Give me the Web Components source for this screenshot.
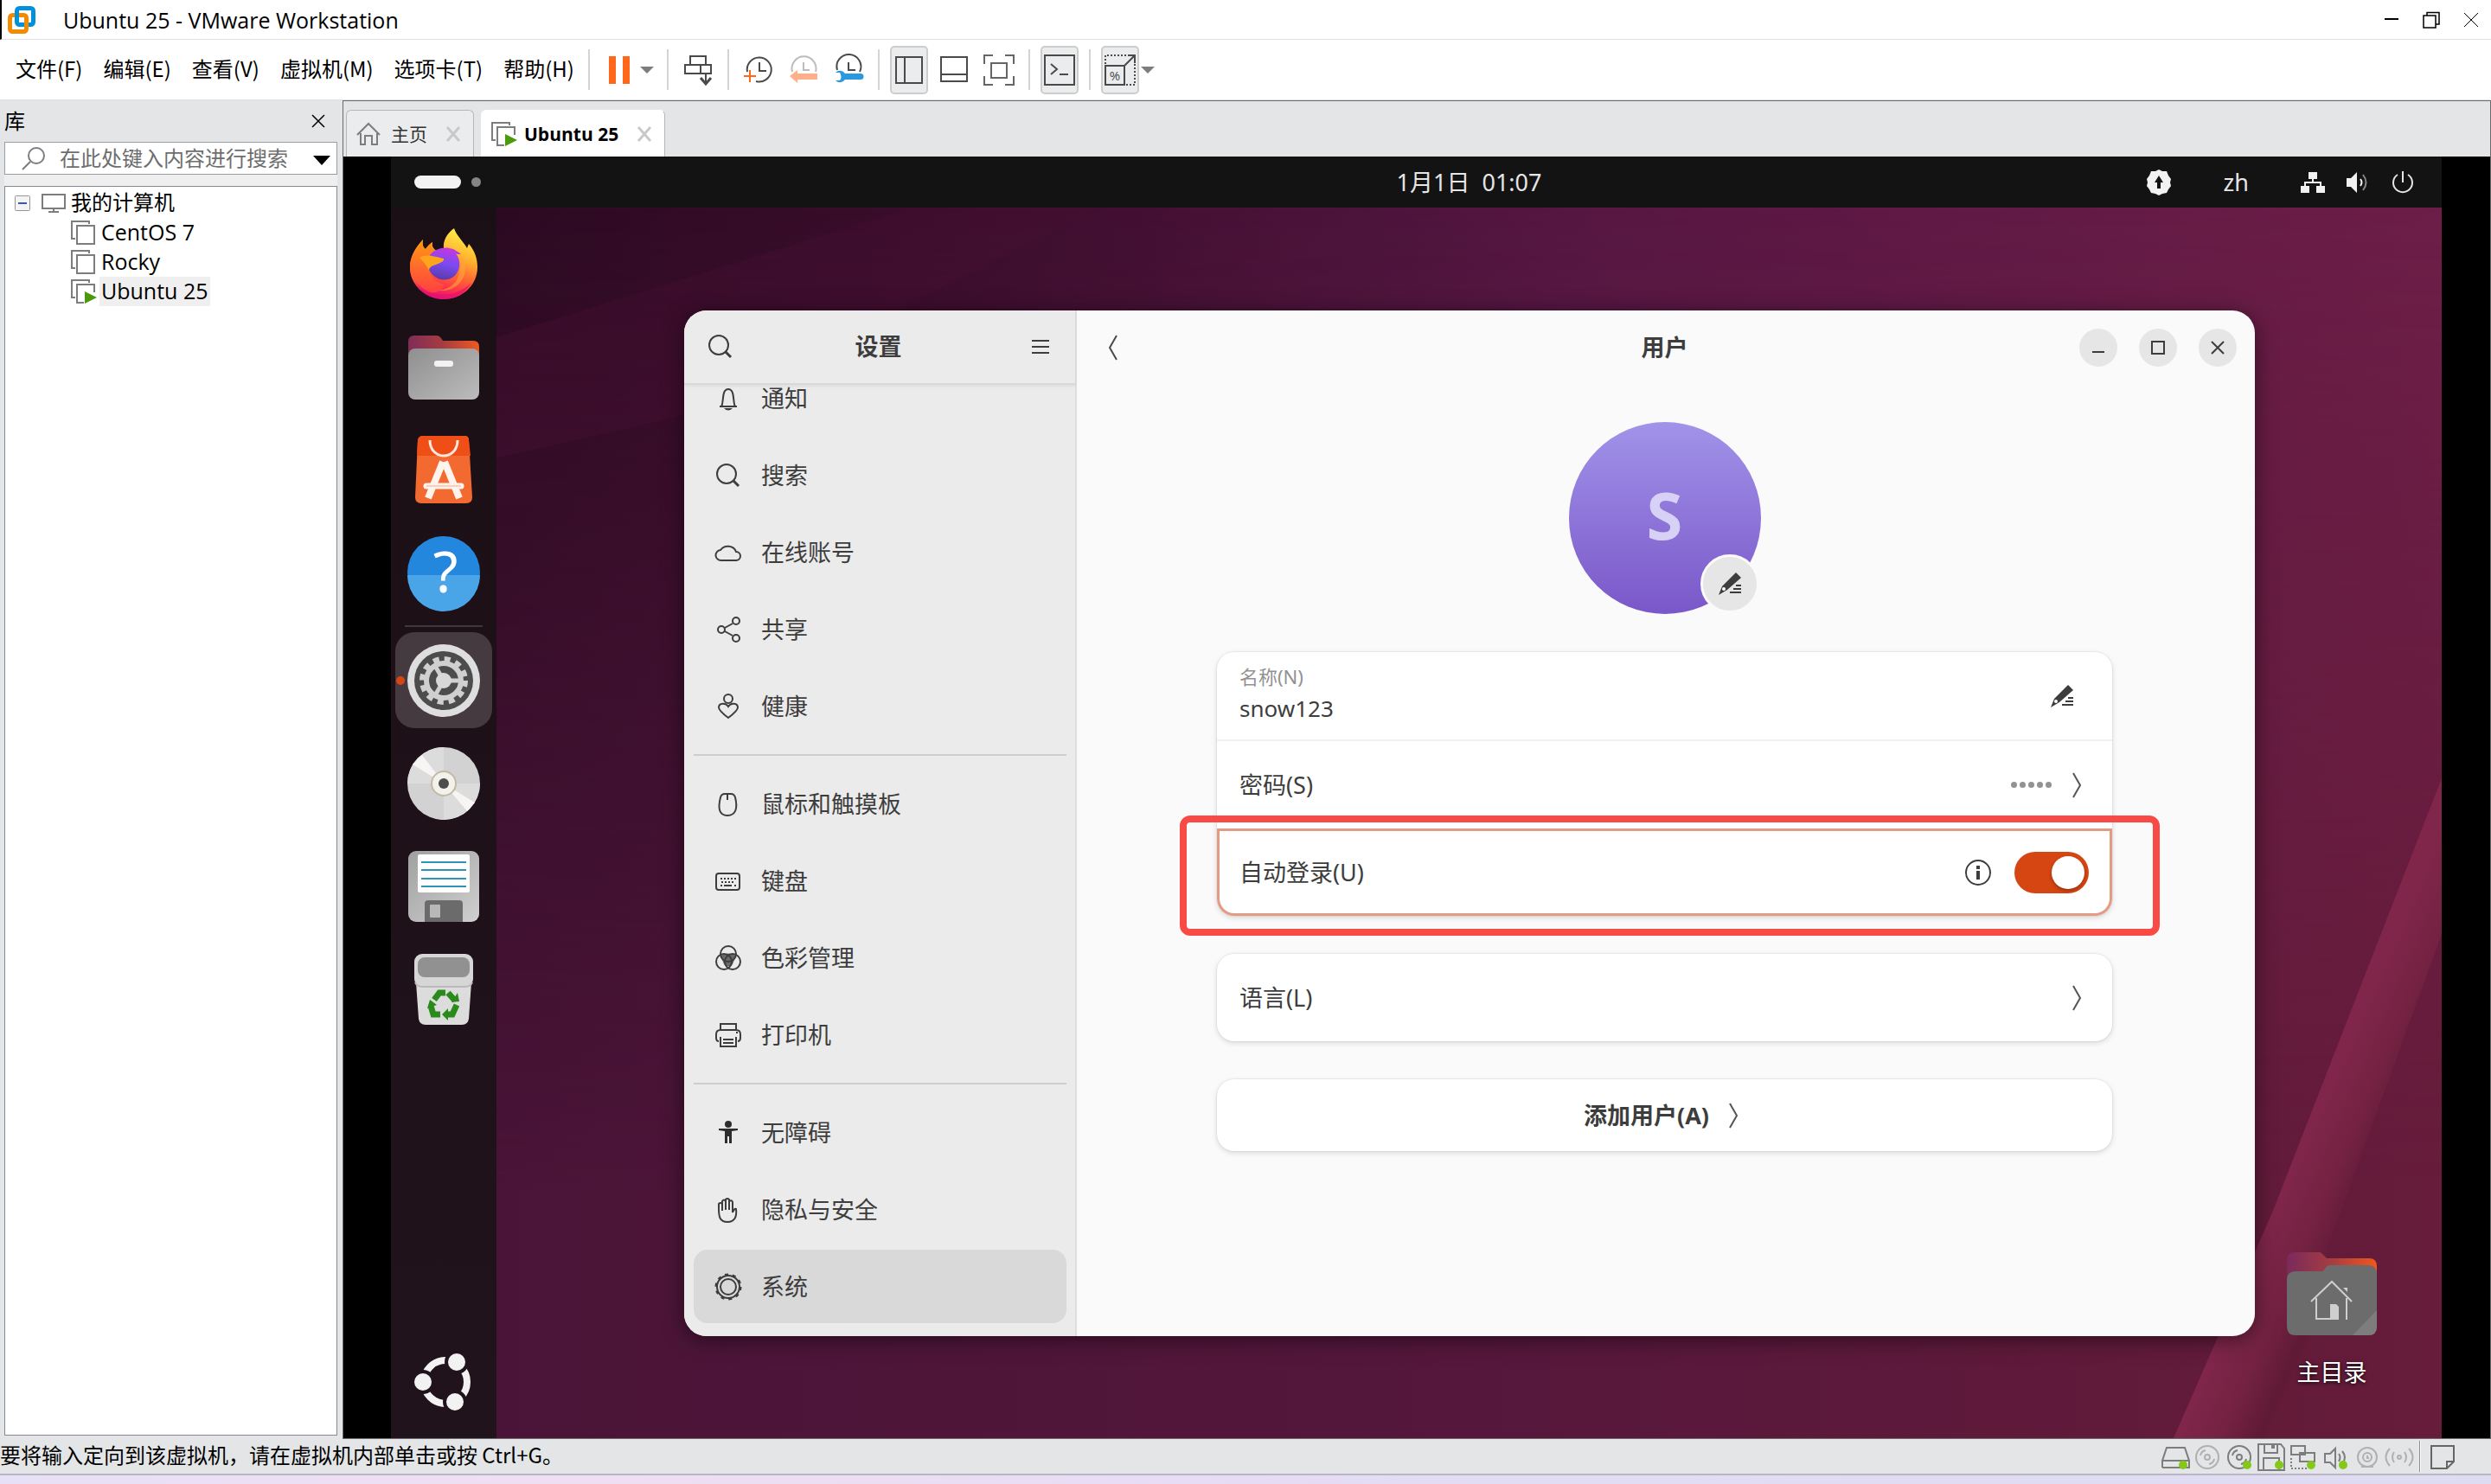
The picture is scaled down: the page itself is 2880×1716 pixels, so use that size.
<!DOCTYPE html>
<html lang="zh-CN">
<head>
<meta charset="utf-8">
<title>Ubuntu 25 - VMware Workstation</title>
<style>
    html, body { height: 100%; margin: 0; }
    body {
        background: #e3e5e6;
        color: #000;
        font: 24px/34px "Open Sans", "Noto Sans CJK SC", sans-serif;
    }
</style>
</head>
<body>
<vm-app></vm-app>

<script>
// name: [width, height, markup]
const ICONS = {
    logo: [32, 32, `<g fill="none" stroke-width="5"><rect x="10.500" y="2.500" width="19" height="19" rx="3" stroke="#0091da"/><rect x="2.500" y="10.500" width="19" height="19" rx="3" stroke="#f38b00"/><path d="M10.500 13V18.500a3 3 0 0 0 3 3H16" stroke="#fff" stroke-width="7"/><path d="M10.500 8V18.500a3 3 0 0 0 3 3H19" stroke="#0091da"/></g>`],
    min: [18, 18, `<path d="M1 8h16" stroke="#000" stroke-width="2"/>`],
    restore: [20, 20, `<g fill="none" stroke="#000" stroke-width="1.500"><rect x="1" y="5" width="14" height="14"/><path d="M5 5V1.500h14V15h-4"/></g>`],
    close: [18, 18, `<path d="M1 1l16 16M17 1L1 17" stroke="#000"/>`],
    panelClose: [16, 16, `<path d="M1 1l14 14M15 1L1 15" stroke="#000" stroke-width="1.500"/>`],
    tabClose: [18, 18, `<path d="M2 1l14 16M16 1L2 17" stroke="#c8c9ca" stroke-width="3"/>`],
    caret: [20, 12, `<path d="M0 0h20L10 11z"/>`],
    grayCaret: [16, 10, `<path d="M0 1h16L8 9z" fill="#7d7d7d"/>`],
    pause: [24, 34, `<path d="M0 1h8v32H0zM16 1h8v32h-8z" fill="#ff671b"/>`],
    send: [32, 36, `<g fill="none" stroke="#4a4a4a" stroke-width="2"><path d="M7 12V2h18v10M1 12h30v10H1zM19 12v10M25 22v11"/><path d="M19 27l6 7 6-7" stroke-width="3"/></g>`],
    snapAdd: [34, 34, `<g fill="none" stroke="#4a4a4a" stroke-width="2"><path d="M4 19A14 14 0 1 1 14 30"/><path d="M18 8v10h8"/><path d="M0 24h14M7 17v14" stroke="#ff671b"/></g>`],
    snapBack: [34, 34, `<g fill="none" stroke="#bcbcbc" stroke-width="2"><path d="M4 19A14 14 0 1 1 31 19M17 8v9h7"/></g><path d="M1 24l9-7v4h23v7H10v4z" fill="#ffb08b"/>`],
    snapManage: [34, 34, `<g fill="none" stroke="#4a4a4a" stroke-width="2"><path d="M4 17A14 14 0 1 1 30 19M17 8v9h8"/></g><path d="M2 20a7 7 0 0 1 11 1h18a3 3 0 0 1 0 7H13a7 7 0 0 1-11 1h5q3-4 0-9z" fill="#2a9adf"/>`],
    viewLib: [36, 36, `<path d="M3 3h30v30H3zM13 3v30" fill="none" stroke="#4a4a4a" stroke-width="2"/>`],
    viewThumb: [36, 36, `<path d="M3 3h30v28H3zM3 23h30" fill="none" stroke="#4a4a4a" stroke-width="2"/>`],
    viewFull: [38, 38, `<path d="M2 12V2h10M26 2h10v10M36 26v10H26M12 36H2V26M10 11h18v17H10z" fill="none" stroke="#666" stroke-width="2"/>`],
    consoleView: [38, 38, `<path d="M2 2h34v34H2zM9 12l7 6-7 6M19 24h10" fill="none" stroke="#4a4a4a" stroke-width="2"/>`],
    stretch: [38, 38, `<g fill="none" stroke="#4a4a4a" stroke-width="2"><path d="M2 14h22v22H2zM24 14L35 3M28 2h8v9"/><path d="M2 12V2h26M36 12v24H26" stroke-dasharray="2 2"/></g><text x="13" y="31" text-anchor="middle" font-family="Open Sans" font-size="15" fill="#4a4a4a">%</text>`],
    find: [28, 28, `<g fill="none" stroke="#7d7d7d" stroke-width="2"><circle cx="17" cy="11" r="9"/><path d="M10 18l-9 9"/></g>`],
    expander: [18, 18, `<rect x=".5" y=".5" width="17" height="17" rx="1" fill="#f4f4f4" stroke="#969696"/><path d="M4 9h10" stroke="#3b5aa6" stroke-width="2"/>`],
    monitor: [30, 24, `<path d="M2 2h26v16H2zM15 18v4M9 22h12" fill="none" stroke="#7d7d7d" stroke-width="2"/>`],
    machine: [30, 30, `<path d="M21 5V2H1v20h4M7 7h20v21H7z" fill="none" stroke="#7d7d7d" stroke-width="2"/>`],
    machineOn: [30, 30, `<path d="M21 5V2H1v20h4M27 16V7H7v21h8" fill="none" stroke="#7d7d7d" stroke-width="2"/><path d="M16 15l14 7-14 7z" fill="#4a9a0c"/>`],
    house: [28, 28, `<path d="M1 15L14 2l13 13M5 13v13h5V16h8v10h6V13" fill="none" stroke="#7d7d7d" stroke-width="2"/>`],

    update: [30, 32, `<path d="M15 1l4 2 5 0 2 5 3 4-1 4 1 4-3 4-2 4-5 1-4 2-4-2-5-1-2-4-3-4 1-4-1-4 3-4 2-5 5 0z" fill="#f2f2f2"/><path d="M15 8l5 8h-3v7h-4v-7h-3z" fill="#131313"/>`],
    network: [28, 28, `<path d="M9 2h10v8H9zM0 18h10v8H0zM18 18h10v8H18z" fill="#f2f2f2"/><path d="M14 9v5M5 19v-5h18v5" fill="none" stroke="#f2f2f2" stroke-width="2"/>`],
    volume: [28, 28, `<path d="M1 9h5l7-7v24l-7-7H1z" fill="#f2f2f2"/><path d="M17 10q3 4 0 8" fill="none" stroke="#f2f2f2" stroke-width="2"/><path d="M20 5q7 9 0 18" fill="none" stroke="#888" stroke-width="2"/>`],
    power: [28, 28, `<path d="M8 5a11 11 0 1 0 12 0M14 1v13" fill="none" stroke="#e6e6e6" stroke-width="2"/>`],

    firefox: [84, 84, `<defs>
        <linearGradient id="a" x1=".75" y1="0" x2=".4" y2="1"><stop offset="0" stop-color="#fff24a"/><stop offset=".35" stop-color="#ffb52e"/><stop offset=".6" stop-color="#ff6b32"/><stop offset=".8" stop-color="#ff3647"/><stop offset="1" stop-color="#e0107a"/></linearGradient>
        <linearGradient id="b" x1=".6" y1="0" x2=".4" y2="1"><stop offset="0" stop-color="#c637e0"/><stop offset=".5" stop-color="#7a4bf2"/><stop offset="1" stop-color="#5a3aa8"/></linearGradient>
        <linearGradient id="c" x1="0" y1="0" x2="0" y2="1"><stop offset="0" stop-color="#ff9a12"/><stop offset="1" stop-color="#ff3f43"/></linearGradient></defs>
        <path d="M3 46C3 34 9 24 18 14c-1 6 0 9 3 11 3-4 5-6 8-8-1 5 1 8 5 10l8-3c-1-10 5-18 12-23 3 9 10 14 15 23l2-5c7 8 10 17 10 27 0 21-18 37-39 37S3 67 3 46z" fill="url(#a)"/>
        <path d="M3 46C3 34 9 24 18 14c-1 6 0 9 3 11 3-4 5-6 8-8-1 5 1 8 5 10L26 50q2 12 16 16 0 8-14 10C14 74 3 62 3 46z" fill="url(#c)"/>
        <path d="M26 32c5-7 17-11 27-7 3 2 6 3 9 6-3 0-5 0-6-1 5 6 6 16 1 23-5 8-17 10-25 4-6-4-9-10-8-17z" fill="url(#b)"/>
        <path d="M14 35c8-5 18-1 28 1 1 4-5 5-9 7-4 1-8 3-8 7-2-5-5-9-11-15z" fill="#ffa51c"/>
        <path d="M61 31c7 9 8 20 2 30-5 8-15 13-26 12 18-3 27-15 24-42z" fill="#ffa53a" opacity=".6"/>
        <path d="M8 60c9 17 42 27 66 4-8 14-20 19-32 19S15 76 8 60z" fill="#e50f72" opacity=".7"/>`],
    files: [84, 84, `<defs><linearGradient id="a"><stop offset="0" stop-color="#7f2d57"/><stop offset=".5" stop-color="#a83c40"/><stop offset="1" stop-color="#ee5a22"/></linearGradient><linearGradient id="b" x1="0" y1="0" x2="1" y2="1"><stop offset="0" stop-color="#8f8f8f"/><stop offset="1" stop-color="#bcbcbc"/></linearGradient></defs>
        <path d="M1 30V13q0-7 7-7h26q3 0 5 3l2 3h35q7 0 7 7v15z" fill="url(#a)"/><rect x="1" y="21" width="82" height="59" rx="8" fill="url(#b)"/><rect x="31" y="35" width="22" height="7" rx="3" fill="#f2f2f2"/>`],
    software: [84, 84, `<path d="M18 3h48q5 0 5 5l4 66q0 7-7 7H16q-7 0-7-7l3-66q1-5 6-5z" fill="#f26a30"/><path d="M18 3h48q5 0 5 5l2 18H11l1-18q1-5 6-5z" fill="#ef4f17"/><path d="M26 8c0 24 32 24 32 0" fill="none" stroke="#ffe7dd" stroke-width="3"/>
        <g stroke="#fff3ee" stroke-width="8"><line x1="24" y1="75" x2="41" y2="33"/><line x1="60" y1="75" x2="43" y2="33"/><line x1="22" y1="61" x2="62" y2="61" stroke-width="7" stroke-linecap="round"/></g><line x1="22" y1="61" x2="62" y2="61" stroke="#f7a98b"/>`],
    help: [84, 84, `<circle cx="42" cy="42" r="42" fill="#2487de"/><path d="M0 45a42 42 0 0 0 84 0z" fill="#4aa5e8"/><text x="44" y="65" text-anchor="middle" font-family="Noto Sans" font-size="66" fill="#fff">?</text>`],
    settings: [84, 84, `<circle cx="42" cy="42" r="42" fill="#dedede"/><circle cx="42" cy="42" r="34" fill="#4c4c4c"/><circle cx="42" cy="42" r="25" fill="none" stroke="#cfcfcf" stroke-width="6" stroke-dasharray="7 6.090"/><circle cx="42" cy="42" r="20" fill="none" stroke="#cfcfcf" stroke-width="6"/><path d="M42 42h19M42 42L32 25M42 42L32 59" stroke="#cfcfcf" stroke-width="5"/><circle cx="42" cy="42" r="9" fill="#d8d8d8"/>`],
    disc: [84, 84, `<circle cx="42" cy="42" r="42" fill="#d2d2d2"/><path d="M42 0A42 42 0 0 0 0 42h42zM42 84a42 42 0 0 0 42-42H42z" fill="#dcdcdc"/><path d="M42 42L6 20 17 9zM42 42l36 22-9 10z" fill="#f6f5f3"/><circle cx="42" cy="42" r="14" fill="#f3f1ec" stroke="#c2b9a6" stroke-width="2"/><circle cx="42" cy="42" r="6" fill="#4d4d4d"/>`],
    floppy: [84, 84, `<defs><linearGradient id="a" x1="0" y1="0" x2="1" y2="1"><stop offset="0" stop-color="#a0a0a0"/><stop offset="1" stop-color="#d0d0d0"/></linearGradient></defs><rect x="1" y="1" width="82" height="82" rx="9" fill="url(#a)"/><rect x="12" y="5" width="60" height="44" rx="2" fill="#fff"/><path d="M16 14h52M16 23h52M16 33h52M16 42h52" stroke="#2d94b8" stroke-width="2"/><path d="M20 83V62q0-4 4-4h36q4 0 4 4v21z" fill="#6b6b6b"/><rect x="26" y="63" width="12" height="15" rx="1" fill="#b8b8b8"/>`],
    trash: [84, 84, `<path d="M10 34h64l-3 42q-1 7-8 7H21q-7 0-8-7z" fill="#dcdcdc"/><rect x="8" y="1" width="68" height="38" rx="9" fill="#d6d6d6"/><path d="M9 34q2 5 8 5h50q6 0 8-5" fill="none" stroke="#b9b9b9" stroke-width="2"/><rect x="12" y="5" width="60" height="23" rx="8" fill="#919191"/>
        <g fill="none" stroke="#2a8a1c" stroke-width="7"><path d="M31 54l6-8h7M47 46l8 9M57 60l-5 11h-7M38 71h-8l-3-10"/></g><g fill="#2a8a1c"><path d="M51 57l9-1-2-10zM47 64v14l-7-7zM23 64l11-4-8-6z"/></g>`],
    ubuntu: [68, 68, `<circle cx="36" cy="34" r="25" fill="none" stroke="#f2f2f2" stroke-width="8"/><g fill="#f2f2f2" stroke="#21131b" stroke-width="4"><circle cx="10" cy="34" r="12"/><circle cx="49" cy="11" r="12"/><circle cx="47" cy="57" r="12"/></g>`],
    homeFolder: [104, 96, `<defs><linearGradient id="a"><stop offset="0" stop-color="#7a2a5c"/><stop offset=".5" stop-color="#a53d42"/><stop offset="1" stop-color="#f2571d"/></linearGradient></defs><path d="M0 40V9q0-9 9-9h29q2 0 4 3l4 4h49q9 0 9 9v26z" fill="url(#a)"/><path d="M0 32q0-10 10-10h30q3 0 4-3 3-4 6-4h44q10 0 10 10v61q0 10-10 10H10Q0 96 0 86z" fill="#6c6c6c"/><path d="M76 96l28-29v19q0 10-10 10z" fill="#7d7d7d"/><path d="M28 57l24-23 23 23M34 53v24h25M69 53v25" fill="none" stroke="#cfcfcf" stroke-width="2"/><path d="M50 78V60h7l3 3v15zM65 41h5v5z" fill="#cfcfcf"/>`],

    search: [32, 32, `<g fill="none" stroke="#3d3d3d" stroke-width="2"><circle cx="14" cy="14" r="11"/><path d="M22 22l6 6" stroke-width="3"/></g>`],
    menu: [22, 20, `<path d="M1 3h20M1 10h20M1 17h20" stroke="#3d3d3d" stroke-width="2"/>`],
    bell: [32, 32, `<path d="M6 25h20M8 25c3-4 0-20 8-20s5 16 8 20" fill="none" stroke="#3d3d3d" stroke-width="2"/><path d="M11 27h10q-5 5-10 0z" fill="#3d3d3d"/>`],
    cloud: [32, 32, `<path d="M8 25a6 6 0 0 1-1-12 10 9 0 0 1 18 2 5 5 0 0 1 0 10z" fill="none" stroke="#3d3d3d" stroke-width="2"/>`],
    share: [32, 32, `<g fill="none" stroke="#3d3d3d" stroke-width="2"><circle cx="8" cy="16" r="4"/><circle cx="25" cy="6" r="4"/><circle cx="25" cy="26" r="4"/><path d="M12 14l9-5M12 18l9 5"/></g>`],
    health: [32, 32, `<g fill="none" stroke="#3d3d3d" stroke-width="2"><circle cx="16" cy="7" r="5"/><path d="M16 29C8 23 5 19 5 17c0-5 8-6 11-1 3-5 11-4 11 1 0 2-3 6-11 12z"/></g>`],
    mouse: [32, 32, `<path d="M7 8q1-4 5-4h7q4 0 5 4c3 12 1 21-9 21S4 20 7 8zM15 4v7" fill="none" stroke="#3d3d3d" stroke-width="2"/>`],
    keyboard: [32, 32, `<g fill="none" stroke="#3d3d3d" stroke-width="2"><rect x="2" y="7" width="27" height="19" rx="3"/><path d="M7 13h18M8 17h16" stroke-dasharray="2 2"/><path d="M7 21h2M11 21h9M23 21h2"/></g>`],
    colors: [32, 32, `<path d="M7 13q9-5 18 0l-4 10q-5 5-10 0z" fill="#3d3d3d" opacity=".75"/><g fill="none" stroke="#3d3d3d" stroke-width="2"><circle cx="16" cy="11" r="9"/><circle cx="11" cy="20" r="9"/><circle cx="21" cy="20" r="9"/></g>`],
    printer: [32, 32, `<path d="M7 10V3h18v7M5 23q-3 0-3-4v-4q0-5 5-5h18q5 0 5 5v4q0 4-3 4M7 18v11h18V18M10 21h12M10 25h12M25 13h2" fill="none" stroke="#3d3d3d" stroke-width="2"/>`],
    access: [32, 32, `<g fill="#2d2d2d"><circle cx="16" cy="6" r="4"/><path d="M5 11h22v2l-7 1v14h-3v-8h-2v8h-3V14l-7-1z"/></g>`],
    hand: [32, 32, `<path d="M5 14V9q2-2 4 0v8V6q2-3 4 0v10V4q2-2 4 0v12V6q3-2 4 1v12q2-5 4-4c1 8-1 15-10 15S5 24 5 14z" fill="none" stroke="#3d3d3d" stroke-width="2"/>`],
    gear: [32, 32, `<g fill="none" stroke="#3d3d3d" stroke-width="2"><circle cx="16" cy="16" r="9"/><circle cx="16" cy="16" r="13"/><circle cx="16" cy="16" r="14" stroke-width="3" stroke-dasharray="4 4.800"/></g>`],
    back: [14, 32, `<path d="M11 2L3 16l8 14" fill="none" stroke="#4a4a4a" stroke-width="2"/>`],
    next: [28, 32, `<path d="M10 2l8 14-8 14" fill="none" stroke="#555" stroke-width="2"/>`],
    winMin: [20, 20, `<path d="M3 15h14" stroke="#3d3d3d" stroke-width="2"/>`],
    winMax: [20, 20, `<rect x="3" y="3" width="14" height="14" fill="none" stroke="#3d3d3d" stroke-width="2"/>`],
    winClose: [20, 20, `<path d="M3 3l14 14M17 3L3 17" stroke="#3d3d3d" stroke-width="2"/>`],
    pencil: [28, 28, `<path d="M21 1l6 6L11 21l-10 6 4-10z" fill="#3d3d3d"/><circle cx="7" cy="20" r="2" fill="#fff"/><path d="M21 16h6M18 20h9M14 24h13" stroke="#3d3d3d" stroke-width="2"/>`],
    info: [32, 32, `<circle cx="16" cy="16" r="14" fill="none" stroke="#3d3d3d" stroke-width="2"/><path d="M16 8v4M16 14v10" stroke="#3d3d3d" stroke-width="4"/>`],

    hdd: [36, 36, `<path d="M3 31v-8L8 8h21l5 15v8H3M3 23h31" fill="none" stroke="#7d7d7d" stroke-width="2"/>`],
    cd: [36, 36, `<g fill="none" stroke="#7d7d7d" stroke-width="2"><circle cx="18" cy="19" r="13"/><circle cx="18" cy="19" r="3"/><path d="M10 17q1-5 6-6M26 21q-1 5-6 6"/></g>`],
    floppySmall: [36, 36, `<path d="M3 4h26l4 5v25H3zM10 4v10h15V4M9 34V20h18v14" fill="none" stroke="#7d7d7d" stroke-width="2"/><path d="M18 4h4v5h-4z" fill="#7d7d7d"/>`],
    netSmall: [36, 36, `<g fill="none" stroke="#7d7d7d" stroke-width="2"><path d="M4 6h16v10H4zM14 14h17v10H14z"/><path d="M4 20v12h18" stroke-dasharray="2 2"/></g>`],
    sound: [36, 36, `<path d="M6 15h6l6-6v22l-6-6H6zM22 15q3 4 0 9M26 12q6 7 0 15" fill="none" stroke="#7d7d7d" stroke-width="2"/>`],
    camera: [36, 36, `<g fill="none" stroke="#7d7d7d" stroke-width="2"><circle cx="18" cy="19" r="11"/><circle cx="18" cy="19" r="5"/><path d="M18 17v3h2M11 30h14"/></g>`],
    wireless: [36, 36, `<g fill="none" stroke="#7d7d7d" stroke-width="2"><circle cx="18" cy="19" r="2"/><path d="M12 13q-4 6 0 12M24 13q4 6 0 12M7 9q-9 10 0 20M29 9q9 10 0 20"/></g>`],
    note: [36, 36, `<path d="M5 6h26v18l-8 8H5zM31 24h-8v8" fill="none" stroke="#666" stroke-width="2"/>`]
};

const RESET = `
    * { box-sizing: border-box; }
    button { appearance: none; border: 0; margin: 0; padding: 0; background: none; color: inherit; font: inherit; cursor: pointer; }
    ul { list-style: none; margin: 0; padding: 0; }
    a { color: inherit; text-decoration: none; }
`;

class BaseElement extends HTMLElement {
    constructor() {
        super();
        this.shadow = this.attachShadow({ mode: 'open' });
    }

    connectedCallback() {
        this.shadow.innerHTML = `<style>${RESET}${this.styles()}</style>${this.render()}`;
    }
}

class UiIcon extends BaseElement {
    styles() {
        return `:host { display: inline-flex; flex: none; } svg { display: block; overflow: visible; }`;
    }
    render() {
        const [w, h, body] = ICONS[this.getAttribute('name')];
        return `<svg width="${w}" height="${h}" viewBox="0 0 ${w} ${h}" aria-hidden="true">${body}</svg>`;
    }
}

class VmApp extends BaseElement {
    styles() {
        return `
            :host { display: grid; grid-template-rows: auto auto 1fr auto; min-height: 100vh; }
            main { display: grid; grid-template-columns: 396px 1fr; min-height: 0; }
            .view { display: flex; flex-direction: column; min-width: 0; border: 1px solid #6b6b6b; }
            guest-desktop { flex: 1; }
        `;
    }
    render() {
        return `
            <vm-titlebar>Ubuntu 25 - VMware Workstation</vm-titlebar>
            <vm-menubar></vm-menubar>
            <main>
                <vm-library></vm-library>
                <div class="view">
                    <vm-tabs></vm-tabs>
                    <guest-desktop></guest-desktop>
                </div>
            </main>
            <vm-statusbar>要将输入定向到该虚拟机，请在虚拟机内部单击或按 Ctrl+G。</vm-statusbar>
        `;
    }
}

class VmTitlebar extends BaseElement {
    styles() {
        return `
            :host { display: flex; align-items: center; height: 46px; padding: 0 14px 0 7px; background: #fff; border-bottom: 1px solid #e0e0e0; border-left: 2px solid #000; }
            span { flex: 1; margin-left: 32px; font-size: 25px; }
            nav { display: flex; align-items: center; gap: 27px; }
            button { display: flex; }
        `;
    }
    render() {
        return `
            <ui-icon name="logo"></ui-icon>
            <span><slot></slot></span>
            <nav>
                <button aria-label="最小化"><ui-icon name="min"></ui-icon></button>
                <button aria-label="还原"><ui-icon name="restore"></ui-icon></button>
                <button aria-label="关闭"><ui-icon name="close"></ui-icon></button>
            </nav>
        `;
    }
}

class VmMenubar extends BaseElement {
    styles() {
        return `
            :host { display: flex; align-items: center; height: 70px; background: #fff; border-bottom: 1px solid #e0e0e0; }
            nav { display: flex; gap: 24px; padding: 0 4px 4px 18px; font-family: "Noto Sans CJK SC", sans-serif; }
            hr { width: 2px; height: 47px; margin: 0 12px; border: 0; background: #d4d4d4; }
            .group { display: flex; gap: 8px; }
            .tool { display: flex; align-items: center; justify-content: center; width: 44px; height: 56px; }
            .tool.on { background: #ebecee; border: 2px solid #cdcdcd; border-radius: 5px; }
            .drop { display: flex; align-items: center; justify-content: center; width: 21px; height: 56px; }
        `;
    }
    tool(icon, label, on) {
        return `<button class="tool ${on ? 'on' : ''}" aria-label="${label}"><ui-icon name="${icon}"></ui-icon></button>`;
    }
    drop() {
        return `<button class="drop" aria-label="更多"><ui-icon name="grayCaret"></ui-icon></button>`;
    }
    render() {
        const menus = ['文件(F)', '编辑(E)', '查看(V)', '虚拟机(M)', '选项卡(T)', '帮助(H)'];
        return `
            <nav>${menus.map(m => `<button>${m}</button>`).join('')}</nav>
            <hr>
            ${this.tool('pause', '挂起')}${this.drop()}
            <hr>
            ${this.tool('send', '发送 Ctrl+Alt+Del')}
            <hr>
            <div class="group">
                ${this.tool('snapAdd', '拍摄快照')}${this.tool('snapBack', '恢复快照')}${this.tool('snapManage', '管理快照')}
            </div>
            <hr>
            <div class="group">
                ${this.tool('viewLib', '显示库', true)}${this.tool('viewThumb', '缩略图栏')}${this.tool('viewFull', '全屏')}
            </div>
            <hr>
            ${this.tool('consoleView', '控制台视图', true)}
            <hr>
            ${this.tool('stretch', '拉伸', true)}${this.drop()}
        `;
    }
}

class VmLibrary extends BaseElement {
    styles() {
        return `
            :host { display: flex; flex-direction: column; padding: 0 6px 4px 5px; }
            header { display: flex; align-items: center; justify-content: space-between; height: 48px; padding: 0 14px 0 0; }
            header button { display: flex; }
            .search { display: flex; align-items: center; height: 38px; padding: 0 7px 0 19px; background: #fff; border: 1px solid #9a9da1; }
            input { flex: 1; min-width: 0; margin: 0 0 0 16px; padding: 0; border: 0; outline: 0; background: none; font: inherit; }
            input::placeholder { color: #6e6e6e; }
            .strip { height: 13px; background: #efefef; }
            .tree { flex: 1; padding: 2px 11px; background: #fff; border: 1px solid #868991; }
            .node { display: flex; align-items: center; height: 34px; }
            .root ui-icon + ui-icon { margin: 0 5px 0 12px; }
            li .node { padding-left: 65px; gap: 3px; }
            .name { height: 34px; padding: 0 2px 2px; font-size: 25px; line-height: 32px; }
            .root .name { padding: 0 0 2px; font-size: 24px; }
            .selected .name { background: #efefef; }
        `;
    }
    render() {
        const machines = [['CentOS 7'], ['Rocky'], ['Ubuntu 25', true]];
        return `
            <header>库<button aria-label="关闭"><ui-icon name="panelClose"></ui-icon></button></header>
            <div class="search">
                <ui-icon name="find"></ui-icon>
                <input type="text" aria-label="搜索" placeholder="在此处键入内容进行搜索">
                <button aria-label="筛选"><ui-icon name="caret"></ui-icon></button>
            </div>
            <div class="strip"></div>
            <div class="tree">
                <div class="node root">
                    <ui-icon name="expander"></ui-icon><ui-icon name="monitor"></ui-icon>
                    <button class="name">我的计算机</button>
                </div>
                <ul>
                    ${machines.map(([name, on]) => `
                        <li class="${on ? 'selected' : ''}"><div class="node">
                            <ui-icon name="${on ? 'machineOn' : 'machine'}"></ui-icon>
                            <button class="name">${name}</button>
                        </div></li>`).join('')}
                </ul>
            </div>
        `;
    }
}

class VmTabs extends BaseElement {
    styles() {
        return `
            :host { display: flex; align-items: flex-end; gap: 8px; height: 64px; padding-left: 3px; }
            .tab { display: flex; align-items: center; height: 54px; padding: 0 14px 0 11px; border: 1px solid #b5b7b9; border-bottom: 0; border-radius: 6px 6px 0 0; background: #ebecee; font-size: 21px; }
            .active { background: #fff; border-left-color: #fff; border-top-color: #fff; font-weight: 700; }
            .label { margin: 0 21px 0 12px; color: #333; }
            .active .label { margin-left: 8px; color: #000; }
            .x { display: flex; }
        `;
    }
    render() {
        return `
            <div class="tab"><ui-icon name="house"></ui-icon><button class="label">主页</button><button class="x" aria-label="关闭"><ui-icon name="tabClose"></ui-icon></button></div>
            <div class="tab active"><ui-icon name="machineOn"></ui-icon><button class="label">Ubuntu 25</button><button class="x" aria-label="关闭"><ui-icon name="tabClose"></ui-icon></button></div>
        `;
    }
}

class VmStatusbar extends BaseElement {
    styles() {
        return `
            :host { display: block; font-family: "Noto Sans CJK SC", sans-serif; }
            .bar { display: flex; align-items: center; height: 42px; padding-right: 38px; border-bottom: 2px solid #b8b6c4; }
            .text { flex: 1; padding-bottom: 4px; }
            .devices { display: flex; gap: 1px; }
            .devices span { position: relative; display: flex; }
            .off { opacity: .5; }
            .live::after { content: ""; position: absolute; left: 22px; top: 23px; width: 10px; height: 10px; border-radius: 50%; background: #84c81a; }
            hr { width: 2px; height: 36px; margin: 0 7px 0 5px; border: 0; border-left: 1px solid #8f8f8f; background: #fff; }
            .desk { height: 10px; background: linear-gradient(90deg, #e8e0f6, #efdff2 22%, #e3dcf5 60%, #dedcf2); }
        `;
    }
    render() {
        const devices = [['hdd', 'live'], ['cd', 'off'], ['cd', 'live'], ['floppySmall', 'live'], ['netSmall', 'live'], ['sound', 'live'], ['camera', 'off'], ['wireless', 'off']];
        return `
            <div class="bar">
                <div class="text"><slot></slot></div>
                <div class="devices">${devices.map(([name, state]) => `<span class="${state}"><ui-icon name="${name}"></ui-icon></span>`).join('')}</div>
                <hr>
                <ui-icon name="note"></ui-icon>
            </div>
            <div class="desk"></div>
        `;
    }
}

class GuestDesktop extends BaseElement {
    styles() {
        return `
            :host { display: flex; flex-direction: column; padding: 0 56px 0 55px; background: #000; color: #3d3d3d; font: 27px/40px "Noto Sans", "Noto Sans CJK SC", sans-serif; }
            .body { display: flex; flex: 1; min-height: 0; }
            .canvas { position: relative; flex: 1; overflow: hidden; background: #4a1438; }
            .wall { position: absolute; inset: 0; width: 100%; height: 100%; }
            settings-window { position: absolute; inset: 119px 216px 118px 217px; }
            .home { position: absolute; right: 67px; bottom: 56px; width: 120px; display: flex; flex-direction: column; align-items: center; gap: 23px; color: #fff; text-shadow: 0 1px 4px #000; }
        `;
    }
    render() {
        return `
            <guest-topbar></guest-topbar>
            <div class="body">
                <guest-dock></guest-dock>
                <div class="canvas">
                    <svg class="wall" viewBox="0 0 2249 1423" preserveAspectRatio="none" aria-hidden="true">
                        <defs>
                            <linearGradient id="base" x1="0" y1="0" x2="1" y2="0"><stop offset="0" stop-color="#2c0a22"/><stop offset=".25" stop-color="#3c0e2d"/><stop offset=".55" stop-color="#561742"/><stop offset="1" stop-color="#6d1e48"/></linearGradient>
                            <linearGradient id="low" x1="0" y1="0" x2="1" y2="0"><stop offset="0" stop-color="#491437"/><stop offset=".5" stop-color="#55173c"/><stop offset="1" stop-color="#661c3a"/></linearGradient>
                            <linearGradient id="fade" x1="0" y1="0" x2="0" y2="1"><stop offset="0" stop-color="#fff" stop-opacity="0"/><stop offset=".8" stop-color="#fff"/></linearGradient>
                            <linearGradient id="ray" gradientUnits="userSpaceOnUse" x1="1996" y1="1292" x2="2088" y2="1332"><stop offset="0" stop-color="#80264a"/><stop offset=".5" stop-color="#742242"/><stop offset=".9" stop-color="#5f1a35"/><stop offset="1" stop-color="#641b38"/></linearGradient>
                            <mask id="m"><rect width="2249" height="1423" fill="url(#fade)"/></mask>
                        </defs>
                        <rect width="2249" height="1423" fill="url(#base)"/>
                        <path d="M0 150L480 0H700L217 240 0 290z" fill="#470f33" opacity=".4"/>
                        <rect width="2249" height="1423" fill="url(#low)" mask="url(#m)"/>
                        <path d="M2249 660L2054 1160 1939 1423H2079L2118 1200 2249 840z" fill="url(#ray)"/>
                    </svg>
                    <settings-window></settings-window>
                    <div class="home"><ui-icon name="homeFolder"></ui-icon>主目录</div>
                </div>
            </div>
        `;
    }
}

class GuestTopbar extends BaseElement {
    styles() {
        return `
            :host { display: grid; grid-template-columns: 122px 1fr auto 1fr; align-items: center; height: 59px; background: #131313; color: #e6e6e6; }
            .spaces { display: flex; align-items: center; gap: 12px; padding-left: 27px; }
            .pill { width: 54px; height: 15px; border-radius: 8px; background: #f2f2f2; }
            .dot { width: 11px; height: 11px; border-radius: 50%; background: #858585; }
            time { grid-column: 3; }
            .tray { display: flex; align-items: center; justify-content: flex-end; gap: 60px; padding-right: 31px; }
            .system { display: flex; gap: 24px; }
        `;
    }
    render() {
        return `
            <div class="spaces"><div class="pill"></div><div class="dot"></div></div>
            <time>1月1日&nbsp; 01:07</time>
            <div class="tray">
                <ui-icon name="update"></ui-icon>
                <span>zh</span>
                <div class="system"><ui-icon name="network"></ui-icon><ui-icon name="volume"></ui-icon><ui-icon name="power"></ui-icon></div>
            </div>
        `;
    }
}

class GuestDock extends BaseElement {
    styles() {
        return `
            :host { display: flex; flex-direction: column; align-items: center; gap: 8px; width: 122px; padding: 9px 0 10px; background: linear-gradient(#1b0f16, #21131b); }
            button { position: relative; display: flex; align-items: center; justify-content: center; width: 112px; height: 111px; border-radius: 22px; }
            .active { background: #463a41; }
            .active::before { content: ""; position: absolute; left: 1px; width: 10px; height: 10px; border-radius: 50%; background: #d64613; }
            hr { width: 90px; height: 2px; margin: -2px 0; border: 0; background: #40353b; }
            .apps { margin-top: auto; }
        `;
    }
    render() {
        const item = (icon, label, cls = '') => `<button class="${cls}" aria-label="${label}"><ui-icon name="${icon}"></ui-icon></button>`;
        return `
            ${item('firefox', 'Firefox')}
            ${item('files', '文件')}
            ${item('software', '应用中心')}
            ${item('help', '帮助')}
            <hr>
            ${item('settings', '设置', 'active')}
            ${item('disc', '光盘')}
            ${item('floppy', '软盘')}
            ${item('trash', '回收站')}
            ${item('ubuntu', '显示应用', 'apps')}
        `;
    }
}

class SettingsWindow extends BaseElement {
    styles() {
        return `
            :host { display: grid; grid-template-columns: 454px 1fr; border-radius: 26px; overflow: hidden; background: #fafafa; box-shadow: 0 4px 24px rgba(0, 0, 0, .5); }
            section { display: flex; flex-direction: column; min-width: 0; padding-right: 3px; }
            header { display: grid; grid-template-columns: 1fr auto 1fr; align-items: center; height: 86px; padding: 0 18px; }
            h1 { margin: 0; font-size: 27px; line-height: 40px; font-weight: 700; }
            .back { display: flex; margin-left: 17px; }
            .controls { display: flex; justify-content: flex-end; gap: 25px; }
            .controls button { display: flex; align-items: center; justify-content: center; width: 44px; height: 44px; border-radius: 50%; background: #e6e6e6; }
            .content { display: flex; flex-direction: column; gap: 44px; width: 100%; max-width: 1035px; margin: 0 auto; padding-top: 43px; }
            .card { border-radius: 20px; background: #fff; box-shadow: 0 0 0 1px rgba(0, 0, 0, .04), 0 2px 6px rgba(0, 0, 0, .14); }
            .dots { display: flex; gap: 3px; margin-right: 15px; }
            .dots i { width: 7px; height: 7px; border-radius: 50%; background: #929292; }
            .add { display: flex; align-items: center; justify-content: center; gap: 14px; height: 83px; font-weight: 700; }
        `;
    }
    render() {
        return `
            <settings-sidebar></settings-sidebar>
            <section>
                <header>
                    <button class="back" aria-label="返回"><ui-icon name="back"></ui-icon></button>
                    <h1>用户</h1>
                    <div class="controls">
                        <button aria-label="最小化"><ui-icon name="winMin"></ui-icon></button>
                        <button aria-label="最大化"><ui-icon name="winMax"></ui-icon></button>
                        <button aria-label="关闭"><ui-icon name="winClose"></ui-icon></button>
                    </div>
                </header>
                <div class="content">
                    <user-avatar>S</user-avatar>
                    <div class="card">
                        <name-row label="名称(N)" value="snow123"></name-row>
                        <nav-row><span>密码(S)</span><span slot="end" class="dots"><i></i><i></i><i></i><i></i><i></i></span></nav-row>
                        <switch-row label="自动登录(U)"></switch-row>
                    </div>
                    <div class="card"><nav-row><span>语言(L)</span></nav-row></div>
                    <button class="card add">添加用户(A)<ui-icon name="next"></ui-icon></button>
                </div>
            </section>
        `;
    }
}

class SettingsSidebar extends BaseElement {
    styles() {
        return `
            :host { display: flex; flex-direction: column; min-height: 0; background: #ebebeb; border-right: 2px solid #dedede; }
            header { display: grid; grid-template-columns: 1fr auto 1fr; align-items: center; height: 86px; flex: none; padding: 0 29px 0 26px; border-bottom: 2px solid #d9d9d9; box-shadow: 0 2px 3px rgba(0, 0, 0, .05); }
            header button { display: flex; }
            header button:last-child { justify-self: end; }
            h2 { margin: 0; font-size: 27px; line-height: 40px; font-weight: 700; }
            nav { display: flex; flex: 1; flex-direction: column; justify-content: flex-end; gap: 4px; min-height: 0; overflow: hidden; padding: 0 10px 15px 11px; }
            a { display: flex; flex: none; align-items: center; gap: 22px; height: 85px; padding-left: 24px; border-radius: 16px; }
            a[aria-current] { background: #d9d9d9; }
            hr { flex: none; width: 100%; height: 2px; margin: 9px 0; border: 0; background: #cdcdcd; }
        `;
    }
    render() {
        const groups = [
            [['bell', '通知'], ['search', '搜索'], ['cloud', '在线账号'], ['share', '共享'], ['health', '健康']],
            [['mouse', '鼠标和触摸板'], ['keyboard', '键盘'], ['colors', '色彩管理'], ['printer', '打印机']],
            [['access', '无障碍'], ['hand', '隐私与安全'], ['gear', '系统']]
        ];
        return `
            <header>
                <button aria-label="搜索"><ui-icon name="search"></ui-icon></button>
                <h2>设置</h2>
                <button aria-label="菜单"><ui-icon name="menu"></ui-icon></button>
            </header>
            <nav>
                ${groups.map(items => items.map(([icon, text]) => `
                    <a href="#${icon}" ${icon === 'gear' ? 'aria-current="page"' : ''}><ui-icon name="${icon}"></ui-icon>${text}</a>`).join('')
                ).join('<hr>')}
            </nav>
        `;
    }
}

class UserAvatar extends BaseElement {
    styles() {
        return `
            :host { position: relative; display: flex; align-items: center; justify-content: center; align-self: center; box-sizing: border-box; width: 222px; height: 222px; padding-bottom: 8px; border-radius: 50%; background: linear-gradient(#a193e9, #7a57c9); color: #d8d1f6; font-size: 76px; font-weight: 700; }
            button { position: absolute; right: 2px; bottom: 1px; display: flex; align-items: center; justify-content: center; width: 68px; height: 68px; border: 3px solid #fafafa; border-radius: 50%; background: #e6e6e6; }
        `;
    }
    render() {
        return `<slot></slot><button aria-label="更换头像"><ui-icon name="pencil"></ui-icon></button>`;
    }
}

class NameRow extends BaseElement {
    styles() {
        return `
            :host { display: flex; align-items: center; height: 101px; padding: 0 27px 0 26px; }
            div { display: flex; flex: 1; flex-direction: column; padding-bottom: 8px; }
            label { color: #929292; font-size: 22px; line-height: 36px; }
            input { width: 100%; height: 38px; padding: 0; border: 0; outline: 0; background: none; color: inherit; font: inherit; font-size: 26px; }
            button { display: flex; justify-content: center; width: 62px; }
        `;
    }
    render() {
        return `
            <div><label for="name">${this.getAttribute('label')}</label><input id="name" value="${this.getAttribute('value')}"></div>
            <button aria-label="编辑"><ui-icon name="pencil"></ui-icon></button>
        `;
    }
}

class NavRow extends BaseElement {
    styles() {
        return `
            :host { display: block; }
            :host(:not(:only-child)) { border-top: 2px solid #efefef; }
            button { display: flex; align-items: center; width: 100%; height: 101px; padding: 0 27px 0 26px; text-align: left; }
            .start { flex: 1; }
        `;
    }
    render() {
        return `<button><span class="start"><slot></slot></span><slot name="end"></slot><ui-icon name="next"></ui-icon></button>`;
    }
}

class SwitchRow extends BaseElement {
    styles() {
        return `
            :host { position: relative; display: flex; align-items: center; height: 101px; padding: 0 27px 0 26px; border-radius: 0 0 20px 20px; box-shadow: inset 0 0 0 3px #e39b83; }
            label { flex: 1; }
            .info { display: flex; margin-right: 26px; }
            input { appearance: none; width: 86px; height: 48px; margin: 0; border-radius: 24px; background: #ccc; }
            input::before { content: ""; display: block; width: 38px; height: 38px; margin: 5px; border-radius: 50%; background: #fff; box-shadow: 0 2px 4px rgba(0, 0, 0, .3); }
            input:checked { background: #d64613; }
            input:checked::before { margin-left: 43px; }
            .mark { position: absolute; inset: -15px -55px -23px -43px; border: 8px solid #f84b46; border-radius: 12px; pointer-events: none; }
        `;
    }
    render() {
        return `
            <label for="toggle">${this.getAttribute('label')}</label>
            <button class="info" aria-label="说明"><ui-icon name="info"></ui-icon></button>
            <input id="toggle" type="checkbox" role="switch" checked>
            <div class="mark"></div>
        `;
    }
}

customElements.define('ui-icon', UiIcon);
customElements.define('vm-app', VmApp);
customElements.define('vm-titlebar', VmTitlebar);
customElements.define('vm-menubar', VmMenubar);
customElements.define('vm-library', VmLibrary);
customElements.define('vm-tabs', VmTabs);
customElements.define('vm-statusbar', VmStatusbar);
customElements.define('guest-desktop', GuestDesktop);
customElements.define('guest-topbar', GuestTopbar);
customElements.define('guest-dock', GuestDock);
customElements.define('settings-window', SettingsWindow);
customElements.define('settings-sidebar', SettingsSidebar);
customElements.define('user-avatar', UserAvatar);
customElements.define('name-row', NameRow);
customElements.define('nav-row', NavRow);
customElements.define('switch-row', SwitchRow);
</script>
</body>
</html>
